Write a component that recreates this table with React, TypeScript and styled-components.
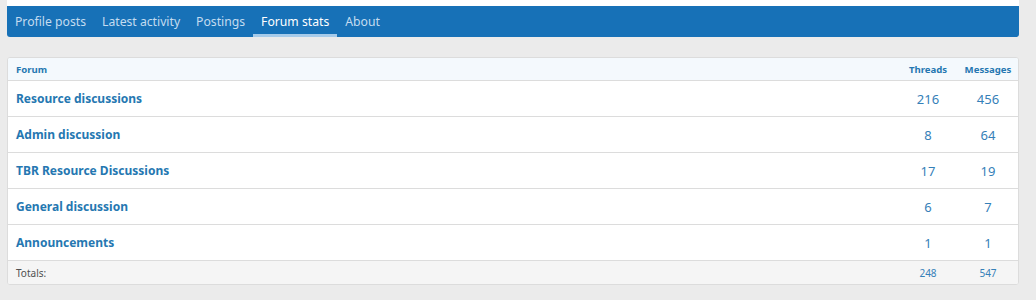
import * as React from 'react'
import styled, { createGlobalStyle } from 'styled-components'

const GlobalStyle = createGlobalStyle`
  html, body {
    margin: 0;
    background: #ebebeb;
    font-family: "Noto Sans", "Open Sans", sans-serif;
  }
`

const Page = styled.div`
  padding: 0 17px 0 7px;
`

const TopBlock = styled.div`
  height: 6px;
  background: #fff;
`

const Nav = styled.nav`
  display: flex;
  background: #1771b7;
  height: 31px;
  border-radius: 0 0 3px 3px;
`

const Tab = styled.a<{ $active?: boolean }>`
  display: flex;
  align-items: center;
  padding: 3px 8px 0;
  font-size: 12.2px;
  color: ${p => (p.$active ? '#fff' : '#c4dcf0')};
  border-bottom: 3px solid ${p => (p.$active ? '#a6cbea' : 'transparent')};
  box-sizing: border-box;
  text-decoration: none;
`

const Card = styled.section`
  margin-top: 20px;
  background: #fff;
  border: 1px solid #dcdcdc;
  border-radius: 3px;
  overflow: hidden;
`

const Row = styled.div<{ $kind?: 'head' | 'body' | 'foot' }>`
  display: grid;
  grid-template-columns: 1fr 60px 60px;
  align-items: center;
  height: ${p => (p.$kind === 'body' ? 36 : p.$kind === 'head' ? 22 : 24)}px;
  background: ${p =>
    p.$kind === 'head' ? '#f4f9fd' : p.$kind === 'foot' ? '#f5f5f5' : '#fff'};
  border-top: ${p => (p.$kind === 'head' ? 'none' : '1px solid #dcdcdc')};
  box-sizing: border-box;
`

const Name = styled.a`
  padding-left: 8px;
  font-size: 12px;
  font-weight: 700;
  color: #2577b1;
  text-decoration: none;
`

const HeadCell = styled.div<{ $center?: boolean }>`
  padding-left: ${p => (p.$center ? 0 : 8)}px;
  text-align: ${p => (p.$center ? 'center' : 'left')};
  font-size: 9.6px;
  font-weight: 700;
  color: #2577b1;
`

const Num = styled.div<{ $small?: boolean }>`
  text-align: center;
  font-size: ${p => (p.$small ? 10 : 13)}px;
  color: #3580b8;
`

const TotalsLabel = styled.div`
  padding-left: 8px;
  font-size: 10px;
  color: #505050;
`

const forums = [
  { name: 'Resource discussions', threads: 216, messages: 456 },
  { name: 'Admin discussion', threads: 8, messages: 64 },
  { name: 'TBR Resource Discussions', threads: 17, messages: 19 },
  { name: 'General discussion', threads: 6, messages: 7 },
  { name: 'Announcements', threads: 1, messages: 1 },
]

const tabs = ['Profile posts', 'Latest activity', 'Postings', 'Forum stats', 'About']

export default function App() {
  return (
    <Page>
      <GlobalStyle />
      <TopBlock />
      <Nav>
        {tabs.map(t => (
          <Tab key={t} href="#" $active={t === 'Forum stats'}>
            {t}
          </Tab>
        ))}
      </Nav>
      <Card>
        <Row $kind="head">
          <HeadCell>Forum</HeadCell>
          <HeadCell $center>Threads</HeadCell>
          <HeadCell $center>Messages</HeadCell>
        </Row>
        {forums.map(f => (
          <Row key={f.name} $kind="body">
            <Name href="#">{f.name}</Name>
            <Num>{f.threads}</Num>
            <Num>{f.messages}</Num>
          </Row>
        ))}
        <Row $kind="foot">
          <TotalsLabel>Totals:</TotalsLabel>
          <Num $small>248</Num>
          <Num $small>547</Num>
        </Row>
      </Card>
    </Page>
  )
}
